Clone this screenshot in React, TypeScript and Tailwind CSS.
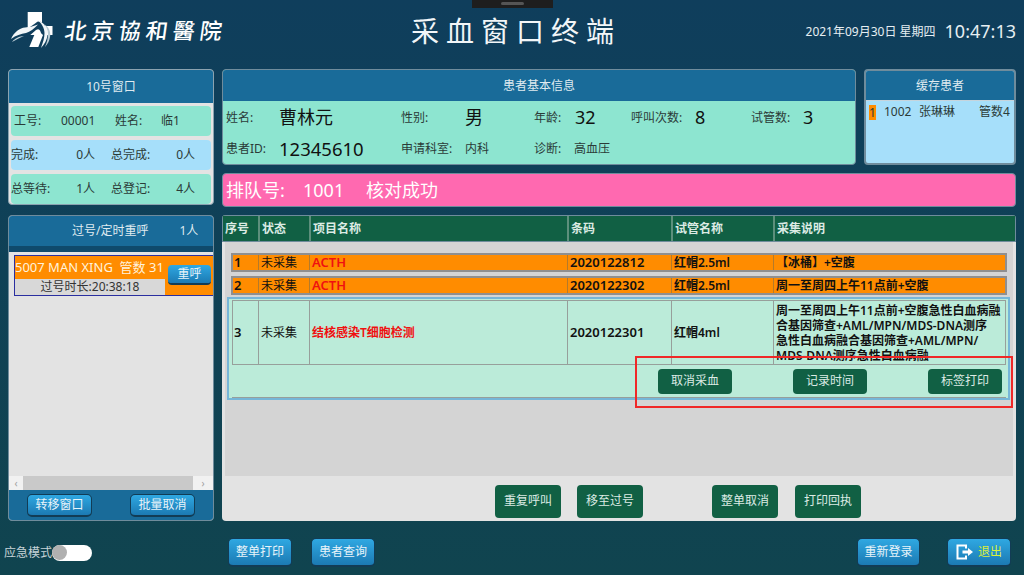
const FONT = "font-['Noto_Sans','Noto_Sans_CJK_SC',sans-serif]";

function BlueBtn({ label, className = "" }: { label: string; className?: string }) {
  return (
    <button className={`h-[23px] rounded-[5px] border border-[#123c55] border-b-2 bg-gradient-to-b from-[#2fa8e2] to-[#1c7ab3] text-[12px] text-[#e8f4fa] ${className}`}>
      {label}
    </button>
  );
}

function GreenBtn({ label, className = "" }: { label: string; className?: string }) {
  return (
    <button className={`rounded-[4px] bg-[#116044] text-[12px] text-[#dcebe4] ${className}`}>{label}</button>
  );
}

function StatRow({ bg, a, b, c, d }: { bg: string; a: string; b: string; c: string; d: string }) {
  return (
    <div className={`flex h-[30px] items-center rounded-[4px] text-[12px] text-[#2b3b38] ${bg}`}>
      <span className="w-[40px] shrink-0 whitespace-nowrap">{a}</span>
      <span className="w-[44px] shrink-0 text-right">{b}</span>
      <span className="ml-[16px] w-[45px] shrink-0 whitespace-nowrap">{c}</span>
      <span className="w-[39px] shrink-0 text-right">{d}</span>
    </div>
  );
}

const headCols = "grid grid-cols-[35px_51px_258px_104px_102px_1fr]";
const rowCols = "grid grid-cols-[25px_51px_258px_104px_102px_1fr]";

function Row({ no, code, name, tube, note }: { no: string; code: string; name: string; tube: string; note: string }) {
  return (
    <div className={`${rowCols} h-[19px] items-center border-2 border-[#8f8f8f] bg-[#ff8c00] text-[12px] font-semibold leading-[15px] text-[#111]`}>
      <span className="pl-[1px] text-[13px]">{no}</span>
      <span className="border-l border-[#b57a2a] pl-[2px] font-normal">未采集</span>
      <span className="border-l border-[#b57a2a] pl-[2px] text-[13px] text-[#f01010]">{name}</span>
      <span className="border-l border-[#b57a2a] pl-[2px] text-[13px]">{code}</span>
      <span className="border-l border-[#b57a2a] pl-[2px]">{tube}</span>
      <span className="border-l border-[#b57a2a] pl-[2px] whitespace-nowrap">{note}</span>
    </div>
  );
}

function Logo() {
  return (
    <svg width="42" height="38" viewBox="0 0 42 38" className="shrink-0">
      {/* cross */}
      <path d="M16.7 1 H31 V15 H41.5 V24 H16.7 Z" fill="#fff" />
      {/* dark bird body cut through the cross */}
      <path d="M9 26 C14 18 21 15 26 11 C31 9 35 15 35 24 L30 24 C30 19 28 17 25 19 L17 26 Z" fill="#0f3e5c" />
      <path d="M16.7 24 H36 V30 H16.7 Z" fill="#0f3e5c" />
      {/* lower shard */}
      <path d="M18.3 36 H27.3 L32 24 L28.3 20.5 L23.3 24 Z" fill="#fff" />
      {/* left wing */}
      <path d="M0 28 C3 21 9 17 14 16.5 C19 16 23 15 27 13.5 C23 18 19 20.5 15 22 C10 23 5 24 0 28 Z" fill="#f2f6f8" />
      <path d="M1 31 C4 27 8 25.5 13 25 C8 27 5 29 1 31 Z" fill="#c7d6dd" />
      {/* right swoosh */}
      <path d="M26 9 C33 11 37 17 36.5 24 C36 29 33.5 33 30 37 C32 31 33.5 27 33.5 22 C33.5 17 30.5 12 26 9 Z" fill="#f2f6f8" />
      <path d="M33 13 C38 16 40 21 39 26 C38.5 30 36.5 33 34 36 C36 31 37 27 37 23 C37 19 35.5 16 33 13 Z" fill="#b9cbd3" />
    </svg>
  );
}

export default function App() {
  return (
    <div className={`${FONT} relative flex h-[575px] w-[1024px] flex-col overflow-hidden bg-gradient-to-b from-[#0f3e5c] to-[#10444f]`}>
      {/* Top notch */}
      <div className="absolute left-[472px] top-0 flex h-[8px] w-[81px] justify-center bg-[#1e1e1e] pt-[2px]">
        <div className="h-[3px] w-[23px] rounded-full bg-[#555]" />
      </div>

      {/* Header */}
      <header className="flex h-[69px] shrink-0 items-start">
        <div className="flex w-[340px] items-center gap-[12px] pl-[11px] pt-[11px]">
          <Logo />
          <span className="skew-x-[-8deg] whitespace-nowrap text-[22px] font-medium leading-[38px] tracking-[5px] text-white">北京協和醫院</span>
        </div>
        <h1 className="ml-[71px] w-[206px] whitespace-nowrap pt-[11px] text-[28px] font-normal leading-[40px] tracking-[7px] text-[#f2f6f8]">采血窗口终端</h1>
        <div className="ml-auto flex items-center gap-[9px] pr-[8px] pt-[18px] text-[#e6eef2]">
          <span className="whitespace-nowrap text-[12px]">2021年09月30日 星期四</span>
          <span className="text-[18px]">10:47:13</span>
        </div>
      </header>

      {/* Main */}
      <div className="flex gap-[8px] pl-[8px] pr-[8px]">
        {/* Left column */}
        <div className="flex w-[206px] shrink-0 flex-col gap-[10px]">
          <section className="h-[136px] overflow-hidden rounded-[4px] border border-[#8ba3b0] bg-[#e3e3e3]">
            <div className="flex h-[33px] items-center justify-center bg-[#196b99] text-[12px] text-[#dfeaf0]">10号窗口</div>
            <div className="flex flex-col gap-[4px] px-[2px] pt-[3px]">
              <div className="flex h-[30px] items-center rounded-[4px] bg-[#8de5d0] pl-[3px] text-[12px] text-[#2b3b38]">
                <span className="w-[47px]">工号:</span>
                <span className="w-[54px]">00001</span>
                <span className="w-[46px]">姓名:</span>
                <span>临1</span>
              </div>
              <StatRow bg="bg-[#a6dffa]" a="完成:" b="0人" c="总完成:" d="0人" />
              <StatRow bg="bg-[#8de5d0]" a="总等待:" b="1人" c="总登记:" d="4人" />
            </div>
          </section>

          <section className="flex h-[306px] flex-col overflow-hidden rounded-[4px] border border-[#6f8c9c] bg-[#e3e3e3]">
            <div className="flex h-[30px] shrink-0 items-center bg-[#196b99] text-[12px] text-[#dfeaf0]">
              <span className="ml-[63px]">过号/定时重呼</span>
              <span className="ml-[31px]">1人</span>
            </div>
            <div className="h-[6px] shrink-0 bg-[#0f4a6c]" />
            <div className="flex-1 pl-[5px] pt-[3px]">
              <div className="flex h-[41px] border-y border-l border-[#2a2fa0] bg-[#ff8c00]">
                <div className="w-[150px] shrink-0">
                  <div className="h-[23px] whitespace-nowrap text-[13px] leading-[23px] text-[#fff2dc]">5007 MAN XING&nbsp; 管数 31</div>
                  <div className="h-[16px] bg-[#d8d8d8] text-center text-[12px] leading-[16px] text-[#333]">过号时长:20:38:18</div>
                </div>
                <button className="ml-[3px] mt-[9px] h-[20px] w-[43px] rounded-[4px] border-b-2 border-[#123c55] bg-gradient-to-b from-[#2fa8e2] to-[#1c7ab3] text-[12px] text-[#e8f4fa]">重呼</button>
              </div>
            </div>
            {/* Scrollbar */}
            <div className="flex h-[14px] shrink-0 items-center bg-[#f1f1f1] text-[10px] text-[#a0a0a0]">
              <span className="w-[14px] text-center">‹</span>
              <div className="h-full flex-1 bg-[#c9c9c9]" />
              <span className="w-[20px] text-center">›</span>
            </div>
            <div className="flex h-[30px] shrink-0 items-center justify-between bg-[#196b99] pl-[18px] pr-[18px]">
              <BlueBtn label="转移窗口" className="w-[65px]" />
              <BlueBtn label="批量取消" className="w-[65px]" />
            </div>
          </section>
        </div>

        {/* Right area */}
        <div className="flex flex-1 flex-col">
          <div className="flex gap-[8px]">
            <section className="h-[96px] w-[634px] overflow-hidden rounded-[4px] border border-[#6f8c9c] bg-[#8de5d0]">
              <div className="flex h-[31px] items-center justify-center bg-[#196b99] text-[12px] text-[#dfeaf0]">患者基本信息</div>
              <div className="flex h-[33px] items-center text-[12px] text-[#2b3b38]">
                <span className="w-[56px] pl-[3px]">姓名:</span>
                <span className="w-[122px] text-[18px] text-[#111]">曹林元</span>
                <span className="w-[64px]">性别:</span>
                <span className="w-[69px] text-[18px] text-[#111]">男</span>
                <span className="w-[41px]">年龄:</span>
                <span className="w-[56px] text-[18px] text-[#111]">32</span>
                <span className="w-[64px] whitespace-nowrap">呼叫次数:</span>
                <span className="w-[56px] text-[18px] text-[#111]">8</span>
                <span className="w-[52px] whitespace-nowrap">试管数:</span>
                <span className="text-[18px] text-[#111]">3</span>
              </div>
              <div className="flex h-[30px] items-center text-[12px] text-[#2b3b38]">
                <span className="w-[56px] whitespace-nowrap pl-[3px]">患者ID:</span>
                <span className="w-[122px] text-[18.5px] text-[#111]">12345610</span>
                <span className="w-[64px] whitespace-nowrap">申请科室:</span>
                <span className="w-[69px]">内科</span>
                <span className="w-[40px]">诊断:</span>
                <span>高血压</span>
              </div>
            </section>
            <section className="h-[96px] flex-1 overflow-hidden rounded-[4px] border-2 border-[#6f8c9c] bg-[#a6dffa]">
              <div className="flex h-[30px] items-center justify-center border-b border-[#c6d4dc] bg-[#196b99] text-[12px] text-[#dfeaf0]">缓存患者</div>
              <div className="flex items-center pt-[2px] text-[12px] text-[#2b3b38]">
                <span className="ml-[3px] h-[15px] w-[7px] bg-[#ff8c00] text-center leading-[15px]">1</span>
                <span className="ml-[8px] w-[35px]">1002</span>
                <span className="w-[60px] whitespace-nowrap">张琳琳</span>
                <span className="whitespace-nowrap">管数4</span>
              </div>
            </section>
          </div>

          <div className="mt-[8px] flex h-[34px] items-center rounded-[4px] border border-[#6f8c9c] bg-[#ff69b0] pl-[3px] text-[18px] text-white">
            <span className="w-[77px] whitespace-nowrap">排队号:</span>
            <span className="w-[63px]">1001</span>
            <span>核对成功</span>
          </div>

          <section className="mt-[8px] flex h-[306px] flex-col overflow-hidden rounded-[4px] bg-[#e3e3e3]">
            <div className={`${headCols} h-[27px] shrink-0 items-center border border-[#6f8c9c] bg-[#116044] text-[12px] font-semibold leading-[25px] text-[#dcebe4]`}>
              <span className="pl-[2px]">序号</span>
              <span className="border-l-2 border-[#5d8f7c] pl-[2px]">状态</span>
              <span className="border-l-2 border-[#5d8f7c] pl-[2px]">项目名称</span>
              <span className="border-l-2 border-[#5d8f7c] pl-[2px]">条码</span>
              <span className="border-l-2 border-[#5d8f7c] pl-[2px]">试管名称</span>
              <span className="border-l-2 border-[#5d8f7c] pl-[2px]">采集说明</span>
            </div>
            <div className="mx-[3px] flex h-[234px] shrink-0 flex-col bg-[#d4d4d4] px-[6px] pt-[11px]">
              <Row no="1" code="2020122812" name="ACTH" tube="红帽2.5ml" note="【冰桶】+空腹" />
              <div className="mt-[4px]">
                <Row no="2" code="2020122302" name="ACTH" tube="红帽2.5ml" note="周一至周四上午11点前+空腹" />
              </div>
              <div className="-ml-[4px] -mr-[3px] mt-[2px] border-2 border-[#76b6d8] bg-[#bbebd9] pl-[3px] pr-[2px] pt-[1px]">
                <div className={`${rowCols} h-[65px] items-center border border-[#979f9b] text-[12px] font-semibold text-[#111]`}>
                  <span className="pl-[1px] text-[13px]">3</span>
                  <span className="flex h-full items-center border-l border-[#979f9b] pl-[2px] font-normal">未采集</span>
                  <span className="flex h-full items-center border-l border-[#979f9b] pl-[2px] text-[#f01010]">结核感染T细胞检测</span>
                  <span className="flex h-full items-center border-l border-[#979f9b] pl-[2px] text-[13px]">2020122301</span>
                  <span className="flex h-full items-center border-l border-[#979f9b] pl-[2px]">红帽4ml</span>
                  <span className="h-full self-start overflow-hidden whitespace-nowrap border-l border-[#979f9b] pl-[2px] pt-[2px] leading-[15px]">
                    周一至周四上午11点前+空腹急性白血病融
                    <br />
                    合基因筛查+AML/MPN/MDS-DNA测序
                    <br />
                    急性白血病融合基因筛查+AML/MPN/
                    <br />
                    MDS-DNA测序急性白血病融
                  </span>
                </div>
                <div className="flex h-[33px] items-center border-b border-[#979f9b] pl-[426px]">
                  <GreenBtn label="取消采血" className="h-[25px] w-[74px]" />
                  <GreenBtn label="记录时间" className="ml-[61px] h-[25px] w-[74px]" />
                  <GreenBtn label="标签打印" className="ml-[61px] h-[25px] w-[74px]" />
                </div>
              </div>
            </div>
            <div className="flex flex-1 items-center pl-[273px] pt-[5px]">
              <GreenBtn label="重复呼叫" className="h-[33px] w-[66px]" />
              <GreenBtn label="移至过号" className="ml-[16px] h-[33px] w-[66px]" />
              <GreenBtn label="整单取消" className="ml-[69px] h-[33px] w-[66px]" />
              <GreenBtn label="打印回执" className="ml-[17px] h-[33px] w-[66px]" />
            </div>
          </section>
        </div>
      </div>

      {/* Bottom bar */}
      <footer className="flex flex-1 items-start pt-[17px]">
        <div className="ml-[4px] flex h-[29px] w-[224px] items-center text-[12px] text-[#c7d4d8]">
          <span className="whitespace-nowrap">应急模式</span>
          <div className="flex h-[16px] w-[40px] items-center rounded-full bg-white">
            <div className="h-[15px] w-[15px] rounded-full bg-[#b0b0b0]" />
          </div>
        </div>
        <BlueBtn label="整单打印" className="h-[29px]! w-[64px]" />
        <BlueBtn label="患者查询" className="ml-[19px] h-[29px]! w-[64px]" />
        <BlueBtn label="重新登录" className="ml-[482px] h-[29px]! w-[63px]" />
        <button className="ml-[27px] flex h-[29px] w-[64px] items-center justify-center gap-[4px] rounded-[5px] border border-[#123c55] border-b-2 bg-gradient-to-b from-[#2fa8e2] to-[#1c7ab3] text-[12px] text-[#dcef3c]">
          <svg width="18" height="16" viewBox="0 0 18 16" fill="none">
            <path d="M10 4.5 V1.5 H1.5 V14.5 H10 V11.5" stroke="#fff" strokeWidth="2" />
            <path d="M6.5 6.5 H12 V4 L17 8 L12 12 V9.5 H6.5 Z" fill="#fff" />
          </svg>
          退出
        </button>
      </footer>

      {/* Red annotation box */}
      <div className="absolute left-[635px] top-[356px] h-[52px] w-[378px] border-2 border-[#f02828]" />
    </div>
  );
}
